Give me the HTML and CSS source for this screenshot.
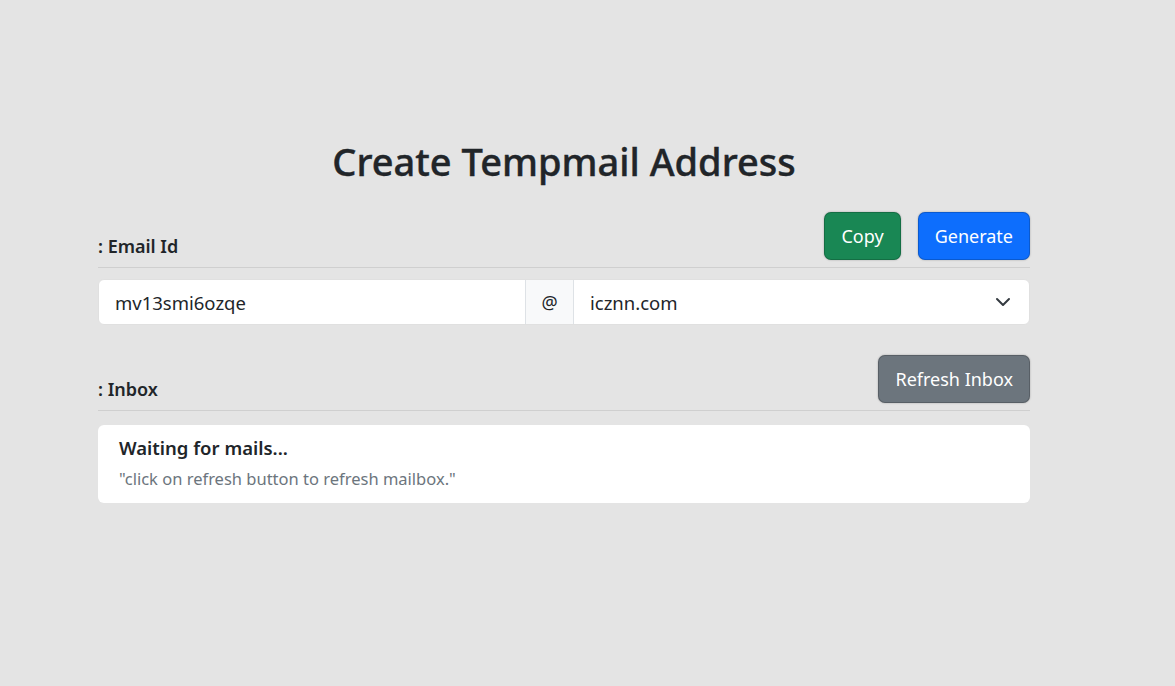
FILE: index.html
```html
<!DOCTYPE html>
<html lang="en">
<head>
<meta charset="utf-8">
<title>Create Tempmail Address</title>
<link rel="stylesheet" href="styles.css">
</head>
<body>
<main class="container">
  <h1 class="title">Create Tempmail Address</h1>

  <section class="section">
    <div class="section-head">
      <h5 class="section-label">: Email Id</h5>
      <div class="actions">
        <button class="btn btn-green">Copy</button>
        <button class="btn btn-blue">Generate</button>
      </div>
    </div>
    <div class="input-group">
      <input class="field field-user" type="text" value="mv13smi6ozqe">
      <span class="addon">@</span>
      <div class="field field-select">
        <span>icznn.com</span>
        <svg class="chevron" width="16" height="16" viewBox="0 0 16 16"><path d="M2 5l6 6 6-6" fill="none" stroke="#343a40" stroke-width="2" stroke-linecap="round" stroke-linejoin="round"/></svg>
      </div>
    </div>
  </section>

  <section class="section section-inbox">
    <div class="section-head">
      <h5 class="section-label">: Inbox</h5>
      <div class="actions">
        <button class="btn btn-grey">Refresh Inbox</button>
      </div>
    </div>
    <div class="card">
      <h6 class="card-title">Waiting for mails...</h6>
      <p class="card-text">"click on refresh button to refresh mailbox."</p>
    </div>
  </section>
</main>
</body>
</html>
```

FILE: styles.css
```css
* { box-sizing: border-box; }
html, body { margin: 0; padding: 0; }
body {
  background: #e4e4e4;
  font-family: "Noto Sans", "Open Sans", sans-serif;
  color: #212529;
}
.container {
  width: 932px;
  margin-left: 98px;
  padding-top: 134px;
}
.title {
  margin: 0;
  text-align: center;
  font-size: 38px;
  font-weight: 500;
  line-height: 54px;
  color: #212529;
  -webkit-text-stroke: 0.4px #212529;
}
.section { margin-top: 24px; }
.section-inbox { margin-top: 30px; }
.section-head {
  display: flex;
  justify-content: space-between;
  align-items: flex-end;
  padding-bottom: 7px;
  border-bottom: 1px solid #cfcfcf;
}
.section-label {
  margin: 0;
  font-size: 18px;
  font-weight: 600;
  line-height: 24px;
  padding-bottom: 2px;
}
.actions { display: flex; gap: 17px; }
.btn {
  font-family: inherit;
  font-size: 18px;
  line-height: 26px;
  padding: 10px 16px;
  border: 1px solid rgba(0,0,0,0.18);
  border-radius: 7px;
  color: #fff;
  box-shadow: 0 0 2px rgba(0,0,0,0.3);
  cursor: pointer;
}
.btn-green { background: #198754; }
.btn-blue { background: #0d6efd; }
.btn-grey { background: #6c757d; }
.input-group {
  display: flex;
  margin-top: 11px;
  height: 46px;
  background: #fff;
  border-radius: 6px;
  border: 1px solid #e0e0e0;
}
.field {
  font-family: inherit;
  font-size: 18.5px;
  color: #212529;
  border: 0;
  background: transparent;
  outline: none;
  padding: 0 16px;
}
.field-user { width: 426px; border-radius: 6px 0 0 6px; }
.addon {
  width: 49px;
  display: flex;
  align-items: center;
  justify-content: center;
  background: #f8f9fa;
  border-left: 1px solid #dee2e6;
  border-right: 1px solid #dee2e6;
  font-size: 18px;
}
.field-select {
  flex: 1;
  display: flex;
  align-items: center;
  justify-content: space-between;
}
.chevron { margin-right: 2px; }
.card {
  margin-top: 14px;
  background: #fff;
  border-radius: 6px;
  padding: 10px 21px 12px;
}
.card-title {
  margin: 0;
  font-size: 18.5px;
  font-weight: 600;
  line-height: 26px;
}
.card-text {
  margin: 6px 0 0;
  font-size: 16.5px;
  line-height: 24px;
  color: #6c757d;
}
```
